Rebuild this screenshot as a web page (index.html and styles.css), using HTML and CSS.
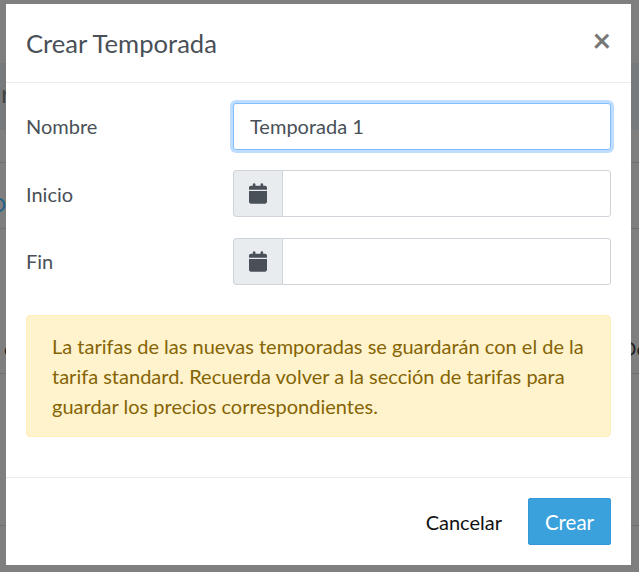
FILE: index.html
```html
<!DOCTYPE html>
<html lang="es">
<head>
    <meta charset="UTF-8">
    <title>Crear Temporada</title>
    <link rel="stylesheet" href="styles.css">
</head>
<body>
    <!-- Page behind the backdrop -->
    <div class="page">
        <div class="page-head"><span class="edge-left">r</span></div>
        <div class="page-row row-short"></div>
        <div class="page-row row-link"><span class="edge-left link">O</span></div>
        <div class="page-row row-tall"><span class="edge-left dark">c</span><span class="edge-right dark">De</span></div>
        <div class="page-row row-last"></div>
    </div>

    <div class="modal">
        <div class="modal-header">
            <h5>Crear Temporada</h5>
            <span class="close">&times;</span>
        </div>
        <div class="modal-body">
            <div class="form-row">
                <label>Nombre</label>
                <input class="form-control focused" type="text" value="Temporada 1">
            </div>
            <div class="form-row">
                <label>Inicio</label>
                <div class="input-group">
                    <span class="input-addon">
                        <svg width="18" height="21" viewBox="0 0 448 512"><path fill="#495057" d="M96 32v32H48C21.5 64 0 85.500 0 112v48h448v-48c0-26.500-21.500-48-48-48h-48V32c0-17.700-14.300-32-32-32s-32 14.300-32 32v32H160V32c0-17.700-14.300-32-32-32S96 14.300 96 32zM448 192H0v272c0 26.500 21.500 48 48 48h352c26.500 0 48-21.500 48-48V192z"/></svg>
                    </span>
                    <input class="form-control" type="text">
                </div>
            </div>
            <div class="form-row">
                <label>Fin</label>
                <div class="input-group">
                    <span class="input-addon">
                        <svg width="18" height="21" viewBox="0 0 448 512"><path fill="#495057" d="M96 32v32H48C21.5 64 0 85.500 0 112v48h448v-48c0-26.500-21.500-48-48-48h-48V32c0-17.700-14.300-32-32-32s-32 14.300-32 32v32H160V32c0-17.700-14.300-32-32-32S96 14.300 96 32zM448 192H0v272c0 26.500 21.500 48 48 48h352c26.500 0 48-21.500 48-48V192z"/></svg>
                    </span>
                    <input class="form-control" type="text">
                </div>
            </div>
            <div class="alert">La tarifas de las nuevas temporadas se guardarán con el de la tarifa standard. Recuerda volver a la sección de tarifas para guardar los precios correspondientes.</div>
        </div>
        <div class="modal-footer">
            <a class="btn-link" href="#">Cancelar</a>
            <button class="btn-primary">Crear</button>
        </div>
    </div>
</body>
</html>
```

FILE: styles.css
```css
* {
    margin: 0;
    padding: 0;
    box-sizing: border-box;
    font-family: Lato, sans-serif;
}

body {
    background: #7f7f7f;
    height: 572px;
    overflow: hidden;
}

.page {
    padding-top: 63px;
}

.page-head {
    height: 67px;
    padding-bottom: 8px;
    background: #777a7c;
    display: flex;
    align-items: center;
    overflow: hidden;
}

.page-row {
    border-bottom: 1px solid #6f6f6f;
    display: flex;
    justify-content: space-between;
    overflow: hidden;
    font-size: 20px;
}

.row-short { height: 33px; }
.row-link { height: 66px; padding-top: 29px; }
.row-tall { height: 145px; align-items: flex-end; padding-bottom: 13px; }
.row-last { height: 152px; }

.edge-left {
    font-size: 25.6px;
    color: #444;
    margin-left: 1px;
}

.edge-left.link {
    font-size: 20px;
    color: #1c5f8a;
    margin-left: -10px;
}

.edge-left.dark,
.edge-right.dark {
    font-size: 20px;
    color: #222;
}

.edge-left.dark { margin-left: 4px; }

.edge-right { margin-right: -8px; }

.modal {
    position: absolute;
    top: 4px;
    left: 6px;
    width: 625px;
    height: 561px;
    background: white;
    color: #495057;
    display: flex;
    flex-direction: column;
}

.modal-header {
    height: 79px;
    padding: 0 20px;
    border-bottom: 1px solid #e9ecef;
    display: flex;
    justify-content: space-between;
    align-items: center;
}

.modal-header h5 {
    font-size: 25.6px;
    font-weight: 400;
}

.close {
    font-size: 32px;
    font-weight: 700;
    color: #777;
    line-height: 1;
    margin-bottom: 7px;
}

.modal-body {
    flex: 1;
    padding: 19.8px 20px 0;
}

.form-row {
    display: flex;
    align-items: center;
    height: 46.8px;
    margin-bottom: 20.8px;
}

.form-row label {
    width: 207px;
    font-size: 20px;
}

.form-control {
    flex: 1;
    width: 100%;
    height: 46.8px;
    padding: 0 16px;
    font-size: 20px;
    color: #495057;
    border: 1px solid #ced4da;
    border-radius: 0 3px 3px 0;
    outline: none;
}

.form-control.focused {
    border-color: #80bdff;
    border-radius: 3px;
    box-shadow: 0 0 0 3px #bfdeff;
}

.input-group {
    flex: 1;
    display: flex;
}

.input-addon {
    width: 49px;
    height: 46.8px;
    background: #e9ecef;
    border: 1px solid #ced4da;
    border-right: none;
    border-radius: 4px 0 0 4px;
    display: flex;
    align-items: center;
    justify-content: center;
}

.alert {
    margin-top: 30.2px;
    padding: 15px 25px;
    height: 122px;
    font-size: 20px;
    line-height: 30px;
    color: #856404;
    background: #fff3cd;
    border: 1px solid #ffeeba;
    border-radius: 4px;
}

.modal-footer {
    height: 88px;
    border-top: 1px solid #e9ecef;
    padding: 20px;
    display: flex;
    justify-content: flex-end;
    align-items: center;
    gap: 26px;
}

.btn-link {
    font-size: 20px;
    color: #111;
    text-decoration: none;
}

.btn-primary {
    width: 83px;
    height: 47px;
    font-size: 20.5px;
    color: white;
    background: #3ba1dc;
    border: 1px solid #3498db;
    border-radius: 2px;
}
```
